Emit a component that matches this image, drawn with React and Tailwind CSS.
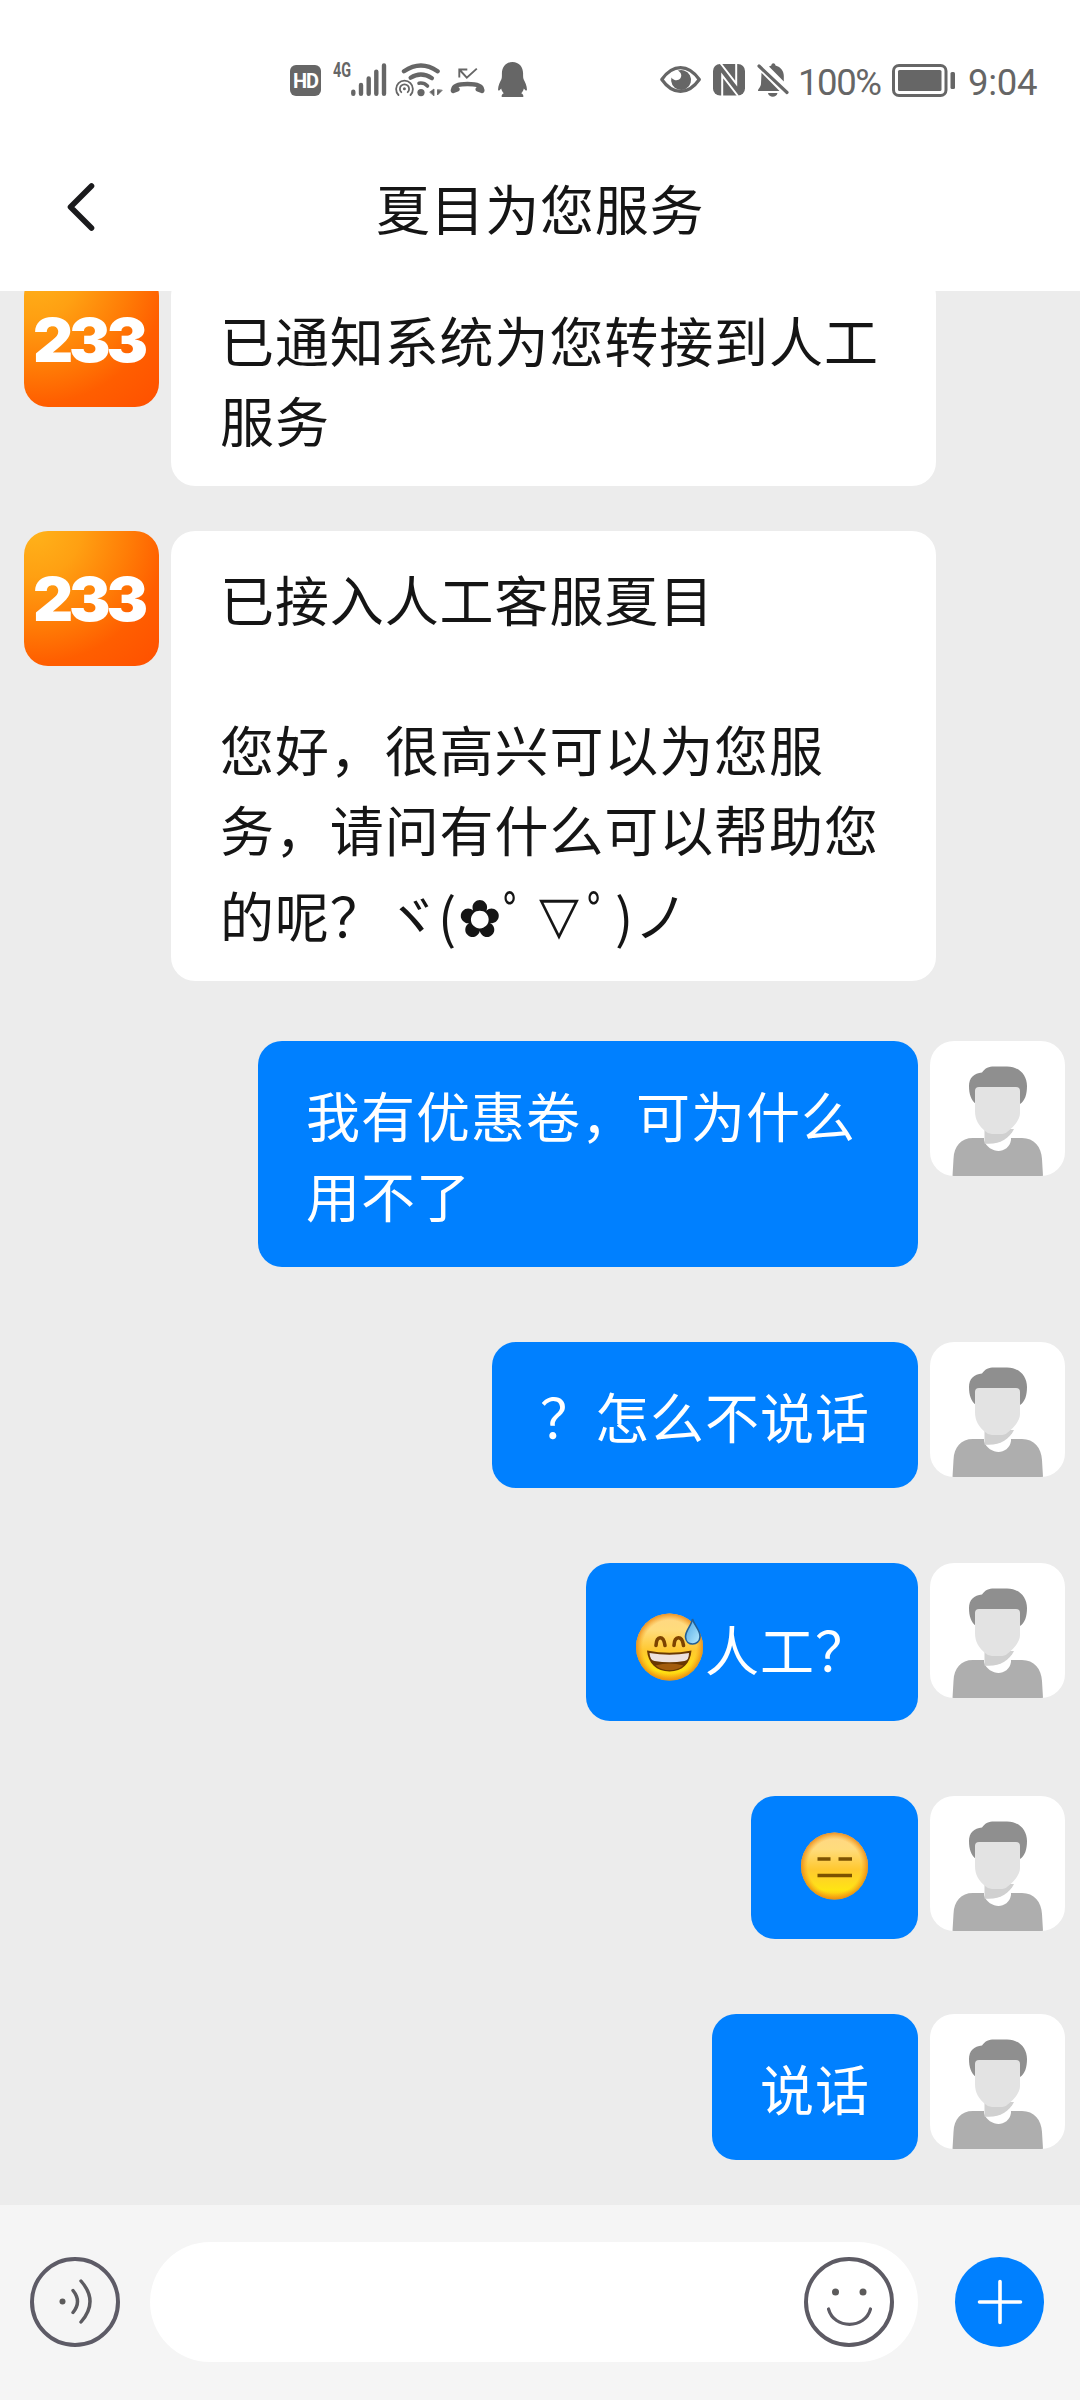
const messages = [
  { id: 1, from: 'agent', className: 'mb-[45px] pt-[28px] pb-[26px]', lines: ['已通知系统为您转接到人工', '服务'] },
  { id: 2, from: 'agent', className: 'mb-[60px] h-[450px] pt-[28px]', lines: ['已接入人工客服夏目', '', '您好，很高兴可以为您服', '务，请问有什么可以帮助您'], kaomoji: true },
  { id: 3, from: 'user', className: 'mb-[75px] w-[660px] pt-[34px] pb-[32px]', lines: ['我有优惠卷，可为什么', '用不了'] },
  { id: 4, from: 'user', className: 'mb-[75px] pt-[34px] pb-[32px]', lines: ['？怎么不说话'] },
  { id: 5, from: 'user', className: 'mb-[75px] h-[158px] pt-[46px]', emoji: 'sweat', lines: ['人工？'] },
  { id: 6, from: 'user', className: 'mb-[75px] h-[143px] pt-[32px]', emoji: 'blank', lines: [] },
  { id: 7, from: 'user', className: 'pt-[34px] pb-[32px]', lines: ['说话'] },
];

function StatusBar() {
  return (
    <div className="flex h-[110px] shrink-0 items-start pt-[60px] pl-[290px] text-[#666]">
      <div className="mt-[5px] flex h-[31px] w-[31px] items-center justify-center rounded-[6px] bg-[#666] font-['Roboto'] text-[20px] leading-none font-bold tracking-[-1px] text-white">
        HD
      </div>
      <div className="ml-[12px] h-[20px] w-[18px] origin-left scale-x-[0.72] pt-[2px] font-['Roboto'] text-[20px] leading-[16px] font-bold">
        4G
      </div>
      <svg className="h-[40px] w-[36px]" viewBox="351 60 36 40" fill="none" stroke="currentColor" strokeWidth="4.4" strokeLinecap="round">
        <path d="M353.3 91.8v2M361 85v8.800M368.7 78.4v15.4M376.3 71.6v22.2M384 65.4v28.4" />
      </svg>
      <svg className="ml-[7px] h-[40px] w-[50px]" viewBox="394 60 50 40" fill="none" stroke="currentColor" strokeLinecap="round">
        <path d="M404 71.3Q421 59.8 437.6 71.3" strokeWidth="4.4" />
        <path d="M410.6 77.8Q421 71 432 78.2" strokeWidth="4.2" />
        <path d="M419 83.2Q424 82.4 427.5 86" strokeWidth="3.6" />
        <circle cx="421" cy="92.6" r="3.6" fill="currentColor" stroke="none" />
        <path d="M398.5 95a8.4 8.4 0 1 1 12 0" strokeWidth="1.8" />
        <path d="M401.3 92.2a4.6 4.6 0 1 1 6.4 0" strokeWidth="1.8" />
        <circle cx="404.4" cy="88.8" r="1.5" fill="currentColor" stroke="none" />
        <path d="M430 92l4-3v6.500zM437.500 90v5l4.500-4.500z" fill="currentColor" stroke="currentColor" strokeWidth="0.8" />
      </svg>
      <svg className="ml-[6px] h-[40px] w-[36px]" viewBox="450 60 36 40" fill="none" stroke="currentColor">
        <path d="M459.3 77.5v-8h8M459.8 70l7 7.6L476.8 68.6" strokeWidth="1.9" />
        <path d="M453.3 89.6Q453.6 84 467.5 84Q481.6 84 482 89.6" strokeWidth="4.6" />
        <path d="M453.2 90.6l4-1.4M482 90.6l-4-1.4" strokeWidth="5" strokeLinecap="round" />
      </svg>
      <svg className="ml-[12px] h-[40px] w-[30px]" viewBox="498 60 30 40" fill="currentColor">
        <path d="M512.5 62c6.6 0 10.6 5 10.6 11.5 0 2-.1 4 .4 5.5 1.700 3.500 3.700 7.500 3.400 11-.6 1.200-1.700.2-3.100-1.600-.4 2-1.200 3.400-2.600 4.800 1.800.8 2.500 2.200 2 3.800h-21.400c-.5-1.600.2-3 2-3.800-1.400-1.400-2.200-2.800-2.600-4.800-1.400 1.800-2.500 2.800-3.100 1.600-.3-3.500 1.700-7.500 3.400-11 .5-1.500.4-3.500.4-5.500C501.900 67 505.900 62 512.500 62z" />
      </svg>

      <svg className="ml-[132px] h-[40px] w-[42px]" viewBox="660 60 42 40" fill="none" stroke="currentColor">
        <path d="M661.8 79.5C667 72 673 67.6 680.5 67.6S694 72 699.3 79.5C694 87 688 91.4 680.5 91.4S667 87 661.8 79.5z" strokeWidth="3.2" strokeLinejoin="round" />
        <path d="M684 70.4a10 10 0 1 1-12.6 7c2 3 6.400 4 8.800 1.200 2.200-2.700 1-6.200-2.400-8a10 10 0 0 1 6.200-.2z" fill="currentColor" stroke="none" />
      </svg>
      <svg className="ml-[11px] h-[40px] w-[33px]" viewBox="713 60 33 40">
        <rect x="713" y="64" width="32" height="31.5" rx="7" fill="currentColor" />
        <path d="M720.7 63.5L736.2 83.5V63.5M722.2 96V75.500L738 96" fill="none" stroke="#fff" strokeWidth="2" />
      </svg>
      <svg className="ml-[11px] h-[40px] w-[34px]" viewBox="757 60 34 40" fill="currentColor">
        <path d="M769 66.5c.8-.5 1.500-.8 2.300-1 .4-3 3.700-3 4.200 0 5.400 1.500 8.300 5.500 8.300 10.500v5.500zM761.5 72.8L779.5 91H758c0-2.500 3-4 3-7.5z" />
        <path d="M768 93h9.500c-.8 5-8.700 5-9.500 0z" />
        <path d="M759 66l28 26.5" stroke="currentColor" strokeWidth="3.2" strokeLinecap="round" />
      </svg>
      <span className="ml-[7px] w-[86px] pt-[3px] font-['Roboto'] text-[36.5px] leading-[40px] tracking-[-1.4px]">100%</span>
      <svg className="ml-[8px] h-[40px] w-[64px]" viewBox="892 60 64 40">
        <rect x="893.5" y="65.5" width="52.5" height="30" rx="5.5" fill="none" stroke="currentColor" strokeWidth="3" />
        <rect x="898" y="70" width="43.5" height="21" rx="1.5" fill="currentColor" />
        <rect x="950.5" y="72" width="4.5" height="17" rx="1.5" fill="currentColor" />
      </svg>
      <span className="ml-[12px] pt-[3px] font-['Roboto'] text-[36.5px] leading-[40px] tracking-[-0.3px]">9:04</span>
    </div>
  );
}

function AgentAvatar() {
  return (
    <div className="flex h-[135px] w-[135px] shrink-0 items-center justify-center overflow-hidden rounded-[24px] bg-[radial-gradient(circle_at_8%_0%,#ffb21a_0%,#ffa012_25%,#ff7c06_52%,#ff5e00_72%,#ff5000_100%)] pr-[5px] pt-px">
      <span className="scale-x-[1.02] font-['Inter'] text-[61px] leading-none font-black tracking-[-4px] text-white">233</span>
    </div>
  );
}

function UserAvatar() {
  return (
    <svg className="h-[135px] w-[135px] shrink-0 rounded-[24px] bg-white" viewBox="0 0 135 135">
      <path d="M22.5 135L23.500 118C24 105 31 97 43 97H92C104 97 111.500 106 112 118L113 135z" fill="#aeaeae" />
      <path d="M54 96H81V99C80 106 74 110 68.5 110S56 106 54 99z" fill="#fff" />
      <path d="M54.5 88H84C79 98 69 104 54.5 102.5z" fill="#d0d0d0" />
      <path d="M46 63C41 59 39 53 39 45C39 37 44 32 52 31.5C55 27 59 25.5 64 25.5H77C89 25.5 97 34 97 45C97 53 95 60 90 63z" fill="#8f8f8f" />
      <path d="M45 50Q45 46 49 46H86Q90 46 90 50V72C90 80 82 87 77 91Q75 93 70 93H62Q58 93 55 90C49 85 45 79 45 70z" fill="#e3e3e3" />
    </svg>
  );
}

function Emoji({ type }) {
  return (
    <svg className="mt-[3px] h-[71px] w-[71px] shrink-0" viewBox="0 0 71 71">
      <defs>
        <radialGradient id={`face-${type}`} cx="50%" cy="50%" r="50%">
          <stop offset="0.8" stopColor="#f49a1a" stopOpacity="0" />
          <stop offset="1" stopColor="#e88412" stopOpacity="0.85" />
        </radialGradient>
        <linearGradient id={`base-${type}`} x1="0" y1="0" x2="0" y2="1">
          <stop offset="0" stopColor="#ffd684" />
          <stop offset="0.25" stopColor="#ffdc7c" />
          <stop offset="0.55" stopColor="#ffc830" />
          <stop offset="0.85" stopColor="#ffe414" />
          <stop offset="1" stopColor="#fbb80c" />
        </linearGradient>
        <linearGradient id="drop" x1="0" y1="0" x2="1" y2="1">
          <stop offset="0" stopColor="#4ca4e4" />
          <stop offset="1" stopColor="#b8ecff" />
        </linearGradient>
      </defs>
      <circle cx="35.5" cy="35" r="33.5" fill={`url(#base-${type})`} />
      <circle cx="35.5" cy="35" r="33.5" fill={`url(#face-${type})`} />
      {type === 'sweat' ? (
        <>
          <path d="M22 33.5C22.5 23.5 29.500 23 31 33.5M40 33.5C40.5 23.5 48 23 49.500 33.5" fill="none" stroke="#7d4300" strokeWidth="3.600" strokeLinecap="round" />
          <path d="M13 38.5Q35.500 43 57.500 38.5C56.500 51 48.500 59.5 35.500 59.5S14 51 13 38.5z" fill="#6a3800" />
          <path d="M15.500 41Q35.500 44.5 55 41Q55 48.5 50.500 49Q35.500 51.5 20.500 49Q16 48.500 15.500 41z" fill="#eee2df" />
          <path d="M21.500 53.500Q35.500 49.5 49.500 53.500Q43.500 58.300 35.500 58.300T21.500 53.500z" fill="#a35c0c" />
          <path d="M58.500 7C60.500 14 66.500 18 66 25C65.500 34 52 34.5 51.500 25C51.500 18 57.500 14 58.500 7z" fill="url(#drop)" stroke="#235f96" strokeWidth="1.6" />
        </>
      ) : (
        <path d="M18.500 28H31.500M39.500 28H53M18.500 44.500H53" stroke="#7c5200" strokeWidth="3.6" />
      )}
    </svg>
  );
}

function Kaomoji() {
  return (
    <div className="flex h-[92px] leading-[92px] whitespace-nowrap">
      <span className="w-[165px]">的呢？</span>
      <span className="w-[53px]">ヾ</span>
      <span className="w-[20px]">(</span>
      <span className="w-[45px] pt-[4px] font-['DejaVu_Sans'] text-[52px]">✿</span>
      <span className="w-[36px]">ﾟ</span>
      <span className="w-[48px] font-['DejaVu_Sans'] text-[52px]">▽</span>
      <span className="w-[28px]">ﾟ</span>
      <span className="w-[19px]">)</span>
      <span>ノ</span>
    </div>
  );
}

function Message({ message }) {
  if (message.from === 'agent') {
    return (
      <div className="flex shrink-0 items-start gap-[12px] pl-[24px]">
        <AgentAvatar />
        <div className={`w-[765px] rounded-[24px] bg-white pl-[49px] text-[54px] leading-[80px] tracking-[0.9px] text-[#151515] ${message.className}`}>
          {message.lines.map((line, i) => (
            <p key={i} className={line ? 'h-[80px] whitespace-nowrap' : 'h-[70px]'}>{line}</p>
          ))}
          {message.kaomoji && <Kaomoji />}
        </div>
      </div>
    );
  }

  return (
    <div className="flex shrink-0 items-start justify-end gap-[12px] pr-[15px]">
      <div className={`flex items-start rounded-[24px] bg-[#0080ff] px-[48px] text-[54px] leading-[80px] tracking-[1px] text-white ${message.className}`}>
        {message.emoji && <Emoji type={message.emoji} />}
        <div>
          {message.lines.map((line) => (
            <p key={line} className="whitespace-nowrap">{line}</p>
          ))}
        </div>
      </div>
      <UserAvatar />
    </div>
  );
}

export default function App() {
  return (
    <div className="flex h-[2400px] w-[1080px] flex-col overflow-hidden bg-[#ececec] font-['Noto_Sans_CJK_SC',sans-serif]">
      <header className="flex h-[291px] shrink-0 flex-col bg-white">
        <StatusBar />
        <div className="grid grid-cols-[160px_1fr_160px] items-start">
          <svg className="mt-[70px] ml-[64px] h-[54px] w-[34px]" viewBox="0 0 34 54" fill="none" stroke="#1a1a1c" strokeWidth="5.6" strokeLinecap="round" strokeLinejoin="round">
            <path d="M27.500 6L6.500 27L27.500 48" />
          </svg>
          <h1 className="pt-[58px] text-center text-[54px] leading-[80px] font-normal tracking-[0.7px] text-[#151515]">夏目为您服务</h1>
        </div>
      </header>

      <main className="flex min-h-0 flex-1 flex-col justify-end overflow-hidden pb-[45px]">
        {messages.map((message) => (
          <Message key={message.id} message={message} />
        ))}
      </main>

      <footer className="flex h-[195px] shrink-0 items-start bg-[#f5f5f5] pt-[37px] pl-[30px]">
        <svg className="mt-[15px] h-[90px] w-[90px]" viewBox="0 0 90 90" fill="none" stroke="#5c5b60" strokeLinecap="round">
          <circle cx="45" cy="45" r="43" strokeWidth="4" stroke="#5d5b66" />
          <circle cx="32.5" cy="44.5" r="3" fill="#5c5b5b" stroke="none" />
          <path d="M43 33.5Q52 44.5 43 55.5M51 24Q69 44.5 51 65" strokeWidth="3.4" />
        </svg>
        <div className="ml-[30px] flex h-[120px] w-[768px] items-center justify-end rounded-full bg-white pr-[24px]">
          <svg className="h-[90px] w-[90px]" viewBox="0 0 90 90" fill="none" stroke="#5d5b64" strokeLinecap="round">
            <circle cx="45" cy="45" r="43" strokeWidth="4" />
            <circle cx="31.5" cy="35" r="3.5" fill="#5c5b5b" stroke="none" />
            <circle cx="59" cy="35" r="3.5" fill="#5c5b5b" stroke="none" />
            <path d="M24.5 52C30 72.5 61 72.5 66.5 52" strokeWidth="3.2" />
          </svg>
        </div>
        <button className="mt-[15px] ml-[37px] flex h-[90px] w-[89px] items-center justify-center rounded-full bg-[#0080ff]">
          <svg className="h-[46px] w-[46px]" viewBox="0 0 46 46" stroke="#fff" strokeWidth="3.6" strokeLinecap="round">
            <path d="M23 2.5V43.5M2.5 23H43.5" />
          </svg>
        </button>
      </footer>
    </div>
  );
}
